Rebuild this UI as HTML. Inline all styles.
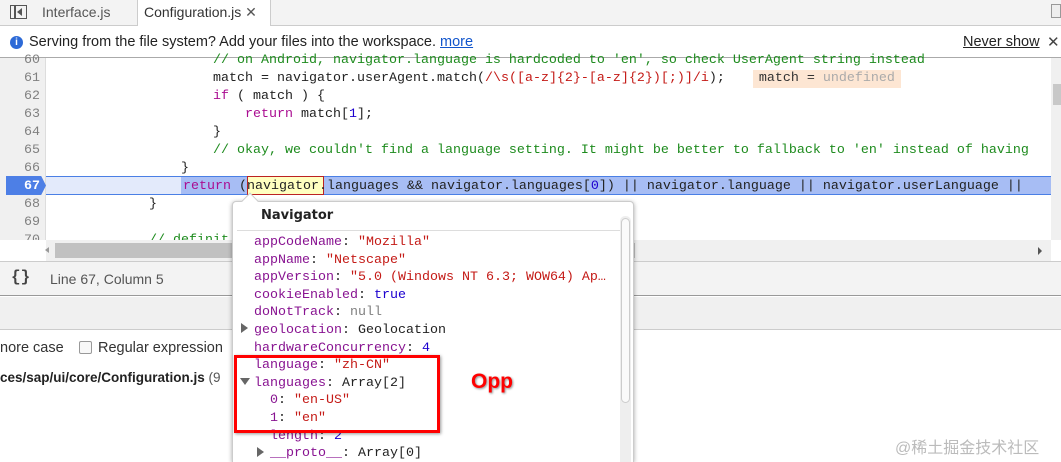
<!DOCTYPE html>
<html style="overflow:hidden;height:462px"><head><meta charset="utf-8"><style>
*{margin:0;padding:0;box-sizing:border-box}
body{width:1061px;height:462px;overflow:hidden;position:relative;background:#fff;font-family:"Liberation Sans",sans-serif;font-size:14px;color:#222}
.a{position:absolute}
.mono{font-family:"Liberation Mono",monospace;font-size:13.33px;white-space:pre}
.ln{position:absolute;left:0;width:40px;text-align:right;color:#808080;font-family:"Liberation Mono",monospace;font-size:13.33px;line-height:18px}
.cl{position:absolute;left:0;height:18px;line-height:18px}
.k{color:#aa0d91}.g{color:#1d8b1d}.r{color:#c41a16}.b{color:#1c00cf}.p{color:#881391}.n{color:#808080}
.pop{font-family:"Liberation Mono",monospace;font-size:13.33px;white-space:nowrap}
.pop div{height:17.6px;line-height:17.6px}
</style></head><body>
<div class="a" style="left:0;top:0;width:1061px;height:26px;background:#f3f3f3;border-bottom:1px solid #ccc"></div>
<div class="a" style="left:10px;top:5px;width:17px;height:14px;border:1.5px solid #555"></div>
<div class="a" style="left:14px;top:5px;width:1.5px;height:14px;background:#555"></div>
<div class="a" style="left:17px;top:8px;width:0;height:0;border-top:4px solid transparent;border-bottom:4px solid transparent;border-right:5px solid #555"></div>
<div class="a" style="left:42px;top:4px;color:#555;font-size:14px">Interface.js</div>
<div class="a" style="left:137px;top:0;width:134px;height:26px;background:#fff;border-left:1px solid #ccc;border-right:1px solid #ccc"></div>
<div class="a" style="left:144px;top:4px;color:#333;font-size:14px">Configuration.js <span style="color:#555">✕</span></div>
<div class="a" style="left:1051px;top:4px;width:10px;height:14px;border:1px solid #999;background:#eee"></div>
<div class="a" style="left:0;top:27px;width:1061px;height:31px;background:#fff;border-bottom:1px solid #aaa"></div>
<div class="a" style="left:10px;top:36px;width:13px;height:13px;border-radius:50%;background:#2d6ad7;color:#fff;font-size:10px;font-weight:bold;text-align:center;line-height:13px">i</div>
<div class="a" style="left:29px;top:34px;font-size:14.5px;color:#222">Serving from the file system? Add your files into the workspace. <span style="color:#1155cc;text-decoration:underline">more</span></div>
<div class="a" style="left:963px;top:34px;font-size:14.5px;color:#222;text-decoration:underline">Never show</div>
<div class="a" style="left:1047px;top:33px;font-size:15px;color:#444">✕</div>
<div class="a" style="left:0;top:58px;width:46px;height:182px;background:#f0f0f0;border-right:1px solid #ddd"></div>
<div class="a" style="left:46px;top:176px;width:1005px;height:19px;background:#e3eafb;border-top:1px solid #4a7fe5;border-bottom:1px solid #4a7fe5"></div>
<div class="a" style="left:181px;top:177px;width:870px;height:17px;background:#a7bdf4"></div>
<div class="a" style="left:6px;top:176px;width:40px;height:19px;background:#4d7fe6;clip-path:polygon(0 0,88% 0,100% 50%,88% 100%,0 100%)"></div>
<div class="a" style="left:247px;top:176px;width:77px;height:19px;background:#ffffc0;border:1px solid #b22"></div>
<div class="a mono" style="left:0;top:52px;width:1051px;height:188px;overflow:hidden">
<div class="ln" style="top:0">60</div><div class="cl g" style="left:213px;top:0">// on Android, navigator.language is hardcoded to 'en', so check UserAgent string instead</div>
<div class="ln" style="top:18px">61</div><div class="cl" style="left:213px;top:18px">match = navigator.userAgent.match(<span class="r">/\s([a-z]{2}-[a-z]{2})[;)]/i</span>);  <span style="margin-left:12px;padding:0 6px;background:#fde6d3;display:inline-block;height:18px"><span style="color:#333">match = </span><span style="color:#aaa">undefined</span></span></div>
<div class="ln" style="top:36px">62</div><div class="cl" style="left:213px;top:36px"><span class="k">if</span> ( match ) {</div>
<div class="ln" style="top:54px">63</div><div class="cl" style="left:245px;top:54px"><span class="k">return</span> match[<span class="b">1</span>];</div>
<div class="ln" style="top:72px">64</div><div class="cl" style="left:213px;top:72px">}</div>
<div class="ln" style="top:90px">65</div><div class="cl g" style="left:213px;top:90px">// okay, we couldn't find a language setting. It might be better to fallback to 'en' instead of having</div>
<div class="ln" style="top:108px">66</div><div class="cl" style="left:181px;top:108px">}</div>
<div class="ln" style="top:126px;color:#fff;font-weight:bold">67</div><div class="cl" style="left:183px;top:126px"><span class="k">return</span> (navigator.languages &amp;&amp; navigator.languages[<span class="b">0</span>]) || navigator.language || navigator.userLanguage ||</div>
<div class="ln" style="top:144px">68</div><div class="cl" style="left:149px;top:144px">}</div>
<div class="ln" style="top:162px">69</div>
<div class="ln" style="top:180px">70</div><div class="cl g" style="left:149px;top:180px">// definit</div>
</div>
<div class="a" style="left:1051px;top:58px;width:10px;height:182px;background:#f0f0f0"></div>
<div class="a" style="left:1053px;top:84px;width:8px;height:21px;background:#c8c8c8"></div>
<div class="a" style="left:46px;top:240px;width:1005px;height:21px;background:#f0f0f0"></div>
<div class="a" style="left:55px;top:243px;width:580px;height:15px;background:#c1c1c1"></div>
<div class="a" style="left:45px;top:247px;width:0;height:0;border-top:3px solid transparent;border-bottom:3px solid transparent;border-right:4px solid #999"></div>
<div class="a" style="left:1038px;top:247px;width:0;height:0;border-top:4px solid transparent;border-bottom:4px solid transparent;border-left:4px solid #555"></div>
<div class="a" style="left:0;top:261px;width:1061px;height:35px;background:#f3f3f3;border-top:1px solid #ccc;border-bottom:1px solid #999"></div>
<div class="a" style="left:11px;top:268px;font-size:16px;font-weight:bold;color:#444;font-family:'Liberation Mono',monospace">{}</div>
<div class="a" style="left:50px;top:271px;font-size:14px;color:#555">Line 67, Column 5</div>
<div class="a" style="left:0;top:297px;width:1061px;height:33px;background:#f0f0f0;border-bottom:1px solid #ccc"></div>
<div class="a" style="left:0;top:340px;font-size:14.5px;color:#333">nore case</div>
<div class="a" style="left:79px;top:341px;width:13px;height:13px;border:1px solid #999;border-radius:2px;background:#f8f8f8"></div>
<div class="a" style="left:98px;top:340px;font-size:14.5px;color:#333">Regular expression</div>
<div class="a" style="left:0;top:370px;font-size:13.5px;font-weight:bold;color:#222">ces/sap/ui/core/Configuration.js <span style="font-weight:normal;color:#555">(9</span></div>
<div class="a" style="left:232px;top:201px;width:402px;height:261px;background:#fff;border:1px solid #ccc;border-bottom:none;border-radius:4px 4px 0 0;box-shadow:0 1px 5px rgba(0,0,0,.35)"></div>
<div class="a" style="left:244px;top:195px;width:12px;height:12px;background:#fff;transform:rotate(45deg);border-left:1px solid #ccc;border-top:1px solid #ccc"></div>
<div class="a" style="left:261px;top:208px;font-size:13px;font-weight:bold;color:#222;font-family:'DejaVu Sans',sans-serif">Navigator</div>
<div class="a" style="left:237px;top:230px;width:385px;height:1px;background:#ddd"></div>
<div class="a" style="left:620px;top:216px;width:11px;height:246px;background:#eee;border-radius:5px 5px 0 0"></div>
<div class="a" style="left:621px;top:218px;width:9px;height:185px;background:#fafafa;border:1px solid #ccc;border-radius:5px"></div>
<div class="a pop" style="left:254px;top:234px"><div><span class="p">appCodeName</span>: <span class="r">"Mozilla"</span></div><div><span class="p">appName</span>: <span class="r">"Netscape"</span></div><div><span class="p">appVersion</span>: <span class="r">"5.0 (Windows NT 6.3; WOW64) Ap…</span></div><div><span class="p">cookieEnabled</span>: <span class="b">true</span></div><div><span class="p">doNotTrack</span>: <span class="n">null</span></div><div><span class="p">geolocation</span>: Geolocation</div><div><span class="p">hardwareConcurrency</span>: <span class="b">4</span></div><div><span class="p">language</span>: <span class="r">"zh-CN"</span></div><div><span class="p">languages</span>: Array[2]</div><div style="padding-left:16px"><span class="p">0</span>: <span class="r">"en-US"</span></div><div style="padding-left:16px"><span class="p">1</span>: <span class="r">"en"</span></div><div style="padding-left:16px"><span class="p">length</span>: <span class="b">2</span></div><div style="padding-left:16px"><span class="p">__proto__</span>: Array[0]</div></div>
<div class="a" style="left:241px;top:323px;border-top:5px solid transparent;border-bottom:5px solid transparent;border-left:7px solid #666"></div>
<div class="a" style="left:240px;top:378px;border-left:5px solid transparent;border-right:5px solid transparent;border-top:7px solid #666"></div>
<div class="a" style="left:257px;top:447px;border-top:5px solid transparent;border-bottom:5px solid transparent;border-left:7px solid #666"></div>
<div class="a" style="left:234px;top:355px;width:206px;height:78px;border:3px solid #f00;box-shadow:1px 1px 3px rgba(0,0,0,.4)"></div>
<div class="a" style="left:471px;top:370px;font-size:21px;font-weight:bold;color:#f00;text-shadow:1px 1px 2px rgba(0,0,0,.45)">Opp</div>
<div class="a" style="left:895px;top:434px;font-size:16px;color:#bbb;font-family:'Liberation Sans','Noto Sans CJK SC',sans-serif">@稀土掘金技术社区</div>
</body></html>
